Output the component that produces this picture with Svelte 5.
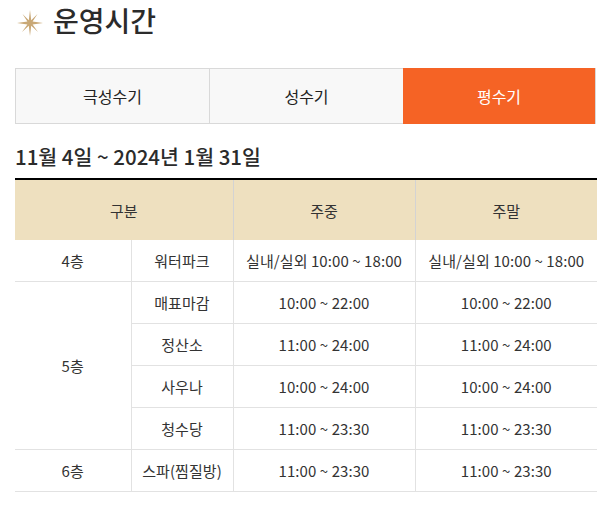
<script>
  const tabs = ["극성수기", "성수기", "평수기"];
  let active = 2;

  const rows = [
    { floor: "4층", span: 1, place: "워터파크", week: "실내/실외 10:00 ~ 18:00", end: "실내/실외 10:00 ~ 18:00" },
    { floor: "5층", span: 4, place: "매표마감", week: "10:00 ~ 22:00", end: "10:00 ~ 22:00" },
    { place: "정산소", week: "11:00 ~ 24:00", end: "11:00 ~ 24:00" },
    { place: "사우나", week: "10:00 ~ 24:00", end: "10:00 ~ 24:00" },
    { place: "청수당", week: "11:00 ~ 23:30", end: "11:00 ~ 23:30" },
    { floor: "6층", span: 1, place: "스파(찜질방)", week: "11:00 ~ 23:30", end: "11:00 ~ 23:30" },
  ];
</script>

<div class="page">
  <h2 class="title">
    <svg class="star" width="26" height="26" viewBox="0 0 26 26" aria-hidden="true">
      <path fill="#c9a876" d="M13 0 L14.2 10.2 L20.5 4 L15.6 11.6 L26 13 L15.6 14.4 L21 22 L14.2 15.8 L13 26 L11.8 15.8 L5 22 L10.4 14.4 L0 13 L10.4 11.6 L5.5 4 L11.8 10.2 Z" />
    </svg>
    운영시간
  </h2>

  <div class="tabs">
    {#each tabs as tab, i}
      <button class="tab" class:on={i === active} onclick={() => (active = i)}>{tab}</button>
    {/each}
  </div>

  <h3 class="period">11월 4일 ~ 2024년 1월 31일</h3>

  <table>
    <colgroup>
      <col class="c1" />
      <col class="c2" />
      <col class="c3" />
      <col />
    </colgroup>
    <thead>
      <tr>
        <th colspan="2">구분</th>
        <th>주중</th>
        <th>주말</th>
      </tr>
    </thead>
    <tbody>
      {#each rows as row}
        <tr>
          {#if row.floor}
            <td class="floor" rowspan={row.span}>{row.floor}</td>
          {/if}
          <td>{row.place}</td>
          <td>{row.week}</td>
          <td>{row.end}</td>
        </tr>
      {/each}
    </tbody>
  </table>
</div>

<style>
  :global(body) {
    background: #fff;
    font-family: "Noto Sans CJK KR", "Noto Sans", sans-serif;
    color: #333;
  }

  .page {
    padding: 0 17px 0 15px;
  }

  .title {
    display: flex;
    align-items: center;
    gap: 10px;
    height: 40px;
    margin: 0 0 28px;
    font-size: 28px;
    font-weight: 500;
    line-height: 40px;
    color: #2b2b2b;
  }

  .star {
    margin-left: 2px;
    margin-top: 6px;
  }

  .tabs {
    display: grid;
    grid-template-columns: 194px 194px 193px;
    height: 56px;
  }

  .tab {
    border: 1px solid #d9d9d9;
    border-right: 0;
    background: #f8f8f8;
    font: inherit;
    font-size: 16px;
    color: #222;
    padding: 0;
    cursor: pointer;
  }

  .tab.on {
    background: #f56325;
    color: #fff;
    border: 0;
    border-right: 1px solid #d9d9d9;
  }

  .period {
    margin: 18px 0 8px;
    font-size: 20.5px;
    font-weight: 500;
    line-height: 28px;
    color: #2b2b2b;
  }

  table {
    width: 100%;
    table-layout: fixed;
    border-collapse: collapse;
    border-top: 2px solid #000;
    font-size: 15px;
    letter-spacing: 0.08px;
    color: #333;
  }

  .c1 { width: 116px; }
  .c2 { width: 102px; }
  .c3 { width: 182px; }

  th {
    height: 60px;
    padding: 0;
    background: #eee0bf;
    font-weight: 400;
    border-left: 1px solid #d3d3d3;
  }

  th:first-child {
    border-left: 0;
  }

  td {
    height: 41px;
    padding: 0;
    text-align: center;
    border-left: 1px solid #e2e2e2;
    border-bottom: 1px solid #e2e2e2;
  }

  td.floor {
    border-left: 0;
  }
</style>
